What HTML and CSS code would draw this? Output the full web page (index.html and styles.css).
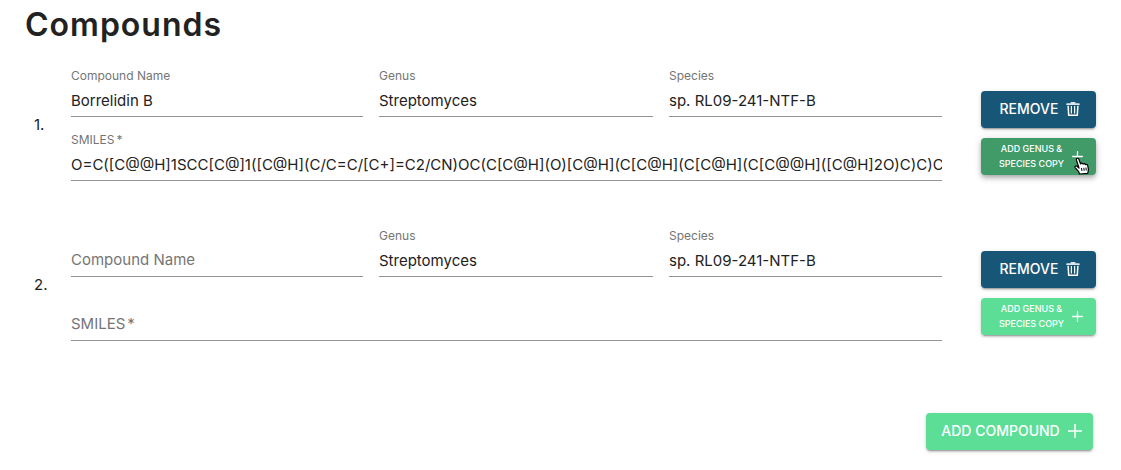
FILE: index.html
```html
<!DOCTYPE html>
<html lang="en">
<head>
<meta charset="utf-8">
<meta name="viewport" content="width=device-width, initial-scale=1">
<title>Compounds</title>
<link rel="stylesheet" href="styles.css">
</head>
<body>
<svg class="sprite" aria-hidden="true">
  <symbol id="trash" viewBox="0 0 14 14">
    <path d="M4.7 0h4.6v1.2H13a.7.7 0 0 1 .7.7v1.2H.3V1.9a.7.7 0 0 1 .7-.7h3.7z" fill="currentColor" opacity=".85"/>
    <path d="M2.1 3.8l.6 9.5h8.6l.6-9.5" fill="none" stroke="currentColor" stroke-width="1.5" stroke-linejoin="round"/>
    <path d="M5.4 4v7.6M8.6 4v7.6" fill="none" stroke="currentColor" stroke-width="1.2"/>
  </symbol>
  <symbol id="plus" viewBox="0 0 14 14">
    <path d="M7 .7v12.6M.7 7h12.6" fill="none" stroke="currentColor" stroke-width="1.6" stroke-linecap="round"/>
  </symbol>
</svg>
<main class="page">
  <h1 class="title">Compounds</h1>
  <form class="form">
    <section class="compound">
      <span class="number">1.</span>
      <div class="fields">
        <div class="field filled"><label for="name1">Compound Name</label><input id="name1" type="text" value="Borrelidin B"></div>
        <div class="field filled"><label for="genus1">Genus</label><input id="genus1" type="text" value="Streptomyces"></div>
        <div class="field filled"><label for="species1">Species</label><input id="species1" type="text" value="sp. RL09-241-NTF-B"></div>
        <div class="field wide filled"><label for="smiles1">SMILES<span class="star">*</span></label><input id="smiles1" type="text" required value="O=C([C@@H]1SCC[C@]1([C@H](C/C=C/[C+]=C2/CN)OC(C[C@H](O)[C@H](C[C@H](C[C@H](C[C@@H]([C@H]2O)C)C)C)C)=O)O"></div>
      </div>
      <div class="actions">
        <button type="button" class="button remove">Remove<svg class="icon"><use href="#trash"/></svg></button>
        <button type="button" class="button copy hovered"><span>Add Genus &amp;<br>Species Copy</span><svg class="icon plus"><use href="#plus"/></svg>
          <svg class="cursor" viewBox="0 0 17 18" aria-hidden="true"><path d="M5.5 17L4.7 14.6 1.3 10.8C.3 9.4 1.8 8.3 3 9.3L5 11 2.5 3.2C1.9 1 4.2.3 4.9 2.3L6.6 7C7.2 5.7 8.6 6 9 7.1 9.8 6.1 11.1 6.5 11.4 7.6 12.7 6.9 13.5 7.7 13.8 9L14.4 12.3 13.8 16.3Z" fill="#fff" stroke="#000" stroke-width="1.2" stroke-linejoin="round"/><path d="M7.5 11l.5 3M9.8 10.8l.4 3M12 10.5l.2 3" fill="none" stroke="#000"/></svg>
        </button>
      </div>
    </section>
    <section class="compound">
      <span class="number">2.</span>
      <div class="fields">
        <div class="field"><label for="name2">Compound Name</label><input id="name2" type="text"></div>
        <div class="field filled"><label for="genus2">Genus</label><input id="genus2" type="text" value="Streptomyces"></div>
        <div class="field filled"><label for="species2">Species</label><input id="species2" type="text" value="sp. RL09-241-NTF-B"></div>
        <div class="field wide"><label for="smiles2">SMILES<span class="star">*</span></label><input id="smiles2" type="text" required></div>
      </div>
      <div class="actions">
        <button type="button" class="button remove">Remove<svg class="icon"><use href="#trash"/></svg></button>
        <button type="button" class="button copy"><span>Add Genus &amp;<br>Species Copy</span><svg class="icon plus"><use href="#plus"/></svg></button>
      </div>
    </section>
    <button type="button" class="button add">Add Compound<svg class="icon"><use href="#plus"/></svg></button>
  </form>
</main>
</body>
</html>
```
FILE: styles.css
```css
* { box-sizing: border-box; }
body {
  margin: 0;
  background: #fff;
  color: #222;
  font-family: Inter, "Liberation Sans", sans-serif;
  font-size: 15px;
}
.sprite { position: absolute; width: 0; height: 0; }
.page { padding: 5px 25px 16px; }
.title { margin: 0 0 23px; font-size: 32px; line-height: 40px; font-weight: 600; letter-spacing: 1px; }
.form { display: flex; flex-direction: column; gap: 47px; }
.compound { display: flex; align-items: center; }
.number { flex: 0 0 46px; padding-left: 9px; line-height: 24px; }
.fields {
  flex: 1;
  min-width: 0;
  display: grid;
  grid-template-columns: 292fr 274fr 273fr;
  gap: 15px 16px;
}
.field { position: relative; min-width: 0; padding-top: 16px; }
.wide { grid-column: 1 / -1; }
.field label {
  position: absolute;
  top: 20px;
  left: 0;
  line-height: 24px;
  color: #757575;
  pointer-events: none;
}
.field.filled label { top: 0; font-size: 12px; line-height: 16px; }
.star { margin-left: 2px; }
.field input {
  display: block;
  width: 100%;
  height: 33px;
  padding: 0;
  border: 0;
  border-bottom: 1px solid #949494;
  border-radius: 0;
  background: transparent;
  color: #222;
  font: inherit;
  outline: 0;
}
.actions { flex: 0 0 115px; margin: 17px 0 0 39px; display: flex; flex-direction: column; gap: 10px; }
.button {
  position: relative;
  display: flex;
  align-items: center;
  justify-content: center;
  gap: 8px;
  height: 37px;
  padding: 0 0 1px;
  border: 0;
  border-radius: 4px;
  color: #fff;
  font: 500 14px/20px Inter, "Liberation Sans", sans-serif;
  text-transform: uppercase;
  box-shadow: 0 3px 1px -2px rgba(0, 0, 0, .2), 0 2px 2px rgba(0, 0, 0, .14), 0 1px 5px rgba(0, 0, 0, .12);
  cursor: pointer;
}
.icon { width: 14px; height: 14px; flex: none; }
.remove { background: #175676; padding-left: 3px; }
.copy { background: #5dde96; font-size: 9px; line-height: 15px; }
.copy.hovered { background: #419b69; box-shadow: 0 2px 4px -1px rgba(0, 0, 0, .2), 0 4px 5px rgba(0, 0, 0, .14), 0 1px 10px rgba(0, 0, 0, .12); }
.plus { width: 11px; height: 11px; }
.cursor { position: absolute; right: 5px; bottom: 0; width: 17px; height: 18px; }
.copy.hovered, .copy { padding-left: 5px; }
.add { align-self: flex-end; width: 167px; margin: 25px 3px 0 0; padding-left: 4px; background: #5dde96; }
```
